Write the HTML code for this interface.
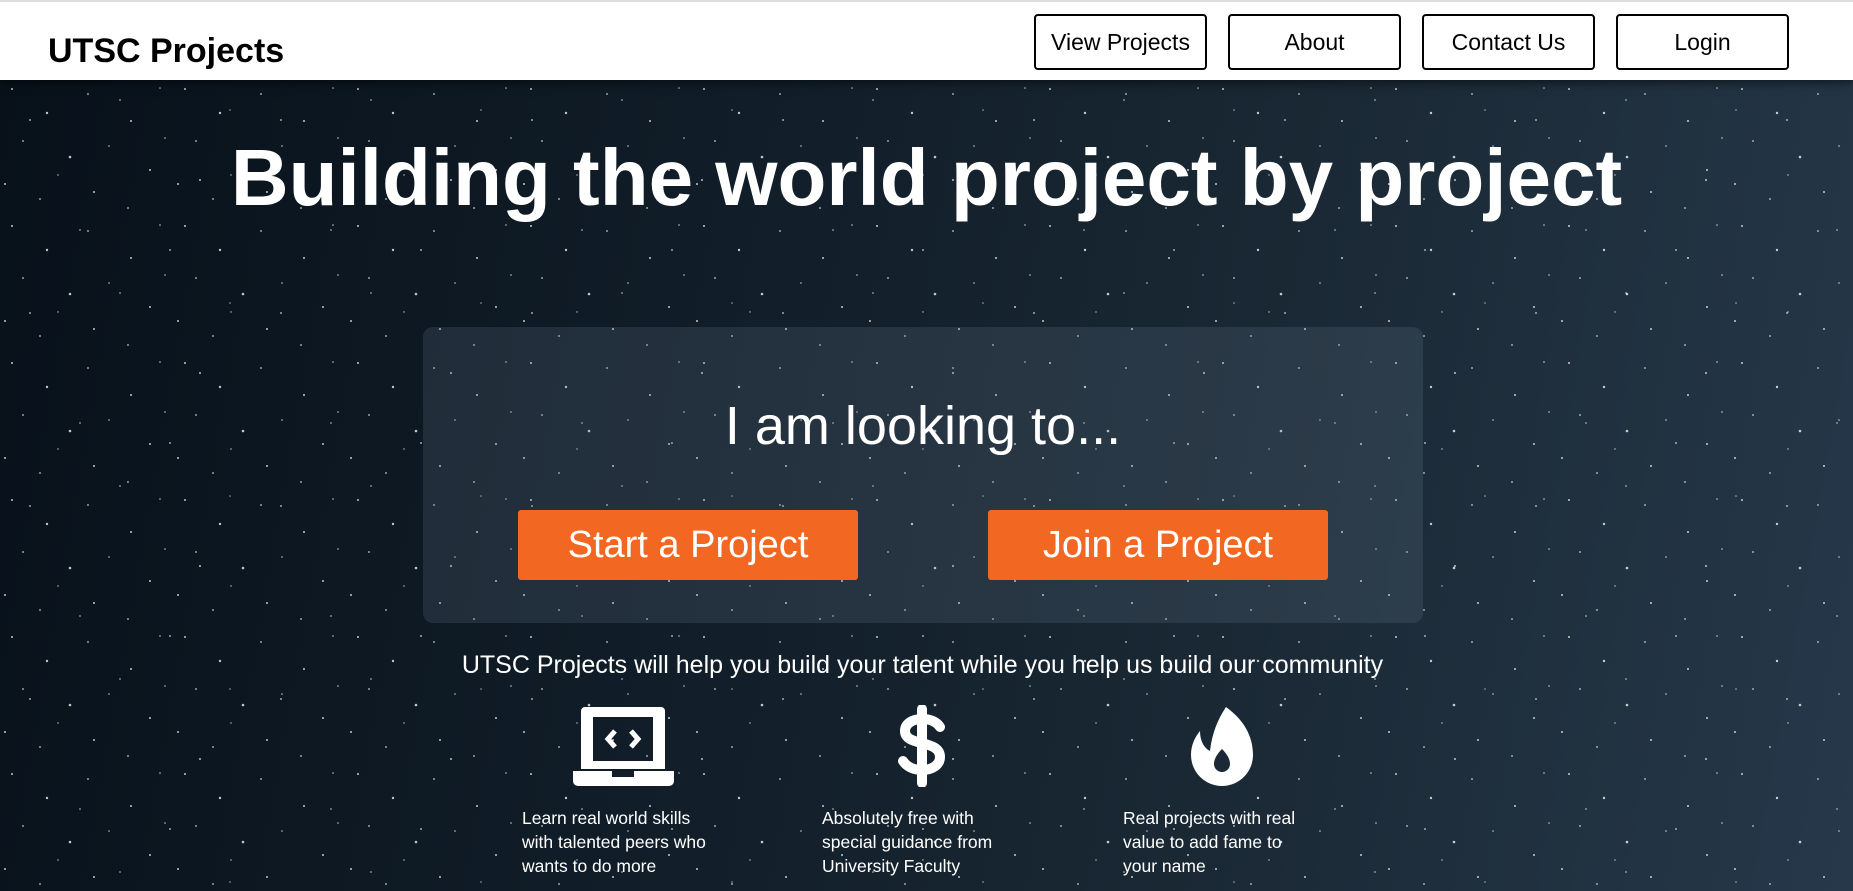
<!DOCTYPE html>
<html><head><meta charset="utf-8"><style>
*{margin:0;padding:0;box-sizing:border-box}
body{width:1853px;height:891px;overflow:hidden;font-family:"Liberation Sans",sans-serif;background:#0d151d;position:relative}
.hero{position:absolute;left:0;top:80px;width:1853px;height:811px;background:linear-gradient(100deg,#08111a 0%,#101c27 35%,#1b2a36 70%,#26384a 100%)}
.stars{position:absolute;left:0;top:0;width:100%;height:100%}
header{position:absolute;left:0;top:0;width:1853px;height:80px;background:#fff;border-top:2px solid #ddd;box-shadow:0 2px 10px rgba(0,0,0,.6);z-index:2}
.logo{position:absolute;left:48px;top:30px;font-size:34px;font-weight:bold;color:#000}
.nb{position:absolute;top:12px;width:173px;height:56px;border:2px solid #000;border-radius:4px;font-size:23px;text-align:center;line-height:52px;color:#000}
h1{position:absolute;left:0;width:1853px;top:132px;text-align:center;color:#fff;font-size:80px;font-weight:bold}
.box{position:absolute;left:423px;top:327px;width:1000px;height:296px;border-radius:10px;background:rgba(120,140,160,.18)}
.look{position:absolute;left:0;width:1000px;top:68px;text-align:center;color:#fff;font-size:54px}
.ob{position:absolute;top:183px;width:340px;height:70px;background:#f26722;border-radius:3px;color:#fff;font-size:38px;text-align:center;line-height:70px}
.tag{position:absolute;left:0;width:1845px;top:651px;text-align:center;color:#fff;font-size:25px}
.txt{position:absolute;top:806px;color:#fff;font-size:17.5px;line-height:24px;width:192px}
svg.ic{position:absolute}
</style></head><body>
<div class="hero">
<svg class="stars" width="1853" height="811"><defs><pattern id="p" width="173" height="137" patternUnits="userSpaceOnUse">
<g fill="#fff" opacity=".75">
<circle cx="12" cy="9" r="1"/><circle cx="47" cy="33" r="1.2"/><circle cx="88" cy="14" r=".9"/><circle cx="131" cy="41" r="1"/><circle cx="160" cy="8" r=".8"/>
<circle cx="23" cy="61" r=".9"/><circle cx="70" cy="77" r="1.3"/><circle cx="109" cy="66" r=".8"/><circle cx="150" cy="90" r="1"/><circle cx="5" cy="104" r="1"/>
<circle cx="40" cy="119" r=".9"/><circle cx="94" cy="112" r="1"/><circle cx="128" cy="128" r=".9"/><circle cx="165" cy="58" r=".8"/><circle cx="58" cy="95" r=".7"/>
</g></pattern>
<pattern id="q" width="251" height="193" patternUnits="userSpaceOnUse"><g fill="#fff" opacity=".6">
<circle cx="30" cy="40" r="1"/><circle cx="120" cy="20" r=".9"/><circle cx="200" cy="100" r="1.1"/><circle cx="80" cy="150" r=".9"/><circle cx="170" cy="170" r="1"/><circle cx="230" cy="30" r=".8"/>
</g></pattern></defs>
<rect width="1853" height="811" fill="url(#p)"/><rect width="1853" height="811" fill="url(#q)"/></svg>
</div>
<header>
<div class="logo">UTSC Projects</div>
<div class="nb" style="left:1034px">View Projects</div>
<div class="nb" style="left:1228px">About</div>
<div class="nb" style="left:1422px">Contact Us</div>
<div class="nb" style="left:1616px">Login</div>
</header>
<h1>Building the world project by project</h1>
<div class="box">
<div class="look">I am looking to...</div>
<div class="ob" style="left:95px">Start a Project</div>
<div class="ob" style="left:565px">Join a Project</div>
</div>
<div class="tag">UTSC Projects will help you build your talent while you help us build our community</div>
<svg class="ic" style="left:573px;top:705px" width="101" height="82" viewBox="0 0 101 82">
<path fill="#fff" fill-rule="evenodd" d="M12 2h76a4 4 0 0 1 4 4v58H8V6a4 4 0 0 1 4-4zM20 12v44h60V12z"/>
<path fill="#fff" d="M0 66h39v6h22v-6h40v10a5 5 0 0 1-5 5H5a5 5 0 0 1-5-5z"/>
<path fill="none" stroke="#fff" stroke-width="5" d="M42 26l-7 8 7 8M58 26l7 8-7 8"/>
</svg>
<svg class="ic" style="left:897px;top:705px" width="50" height="82" viewBox="0 0 50 82">
<path fill="none" stroke="#fff" stroke-width="10" stroke-linecap="round" d="M25 4v74M43 22c-4-6-11-8-18-8-10 0-17 5-17 12 0 16 35 8 35 26 0 8-8 13-18 13-8 0-15-3-19-9"/>
</svg>
<svg class="ic" style="left:1190px;top:705px" width="64" height="82" viewBox="0 0 64 82">
<path fill="#fff" fill-rule="evenodd" d="M36 2C58 18 63 36 63 50a31 31 0 0 1-62 0c0-10 4-18 9-24 0 10 4 17 10 20C22 28 28 14 36 2zM32 44c-6 6-8 11-8 15a8 8 0 0 0 16 0c0-4-2-9-8-15z"/>
</svg>
<div class="txt" style="left:522px">Learn real world skills with talented peers who wants to do more</div>
<div class="txt" style="left:822px">Absolutely free with special guidance from University Faculty</div>
<div class="txt" style="left:1123px">Real projects with real value to add fame to your name</div>
</body></html>
